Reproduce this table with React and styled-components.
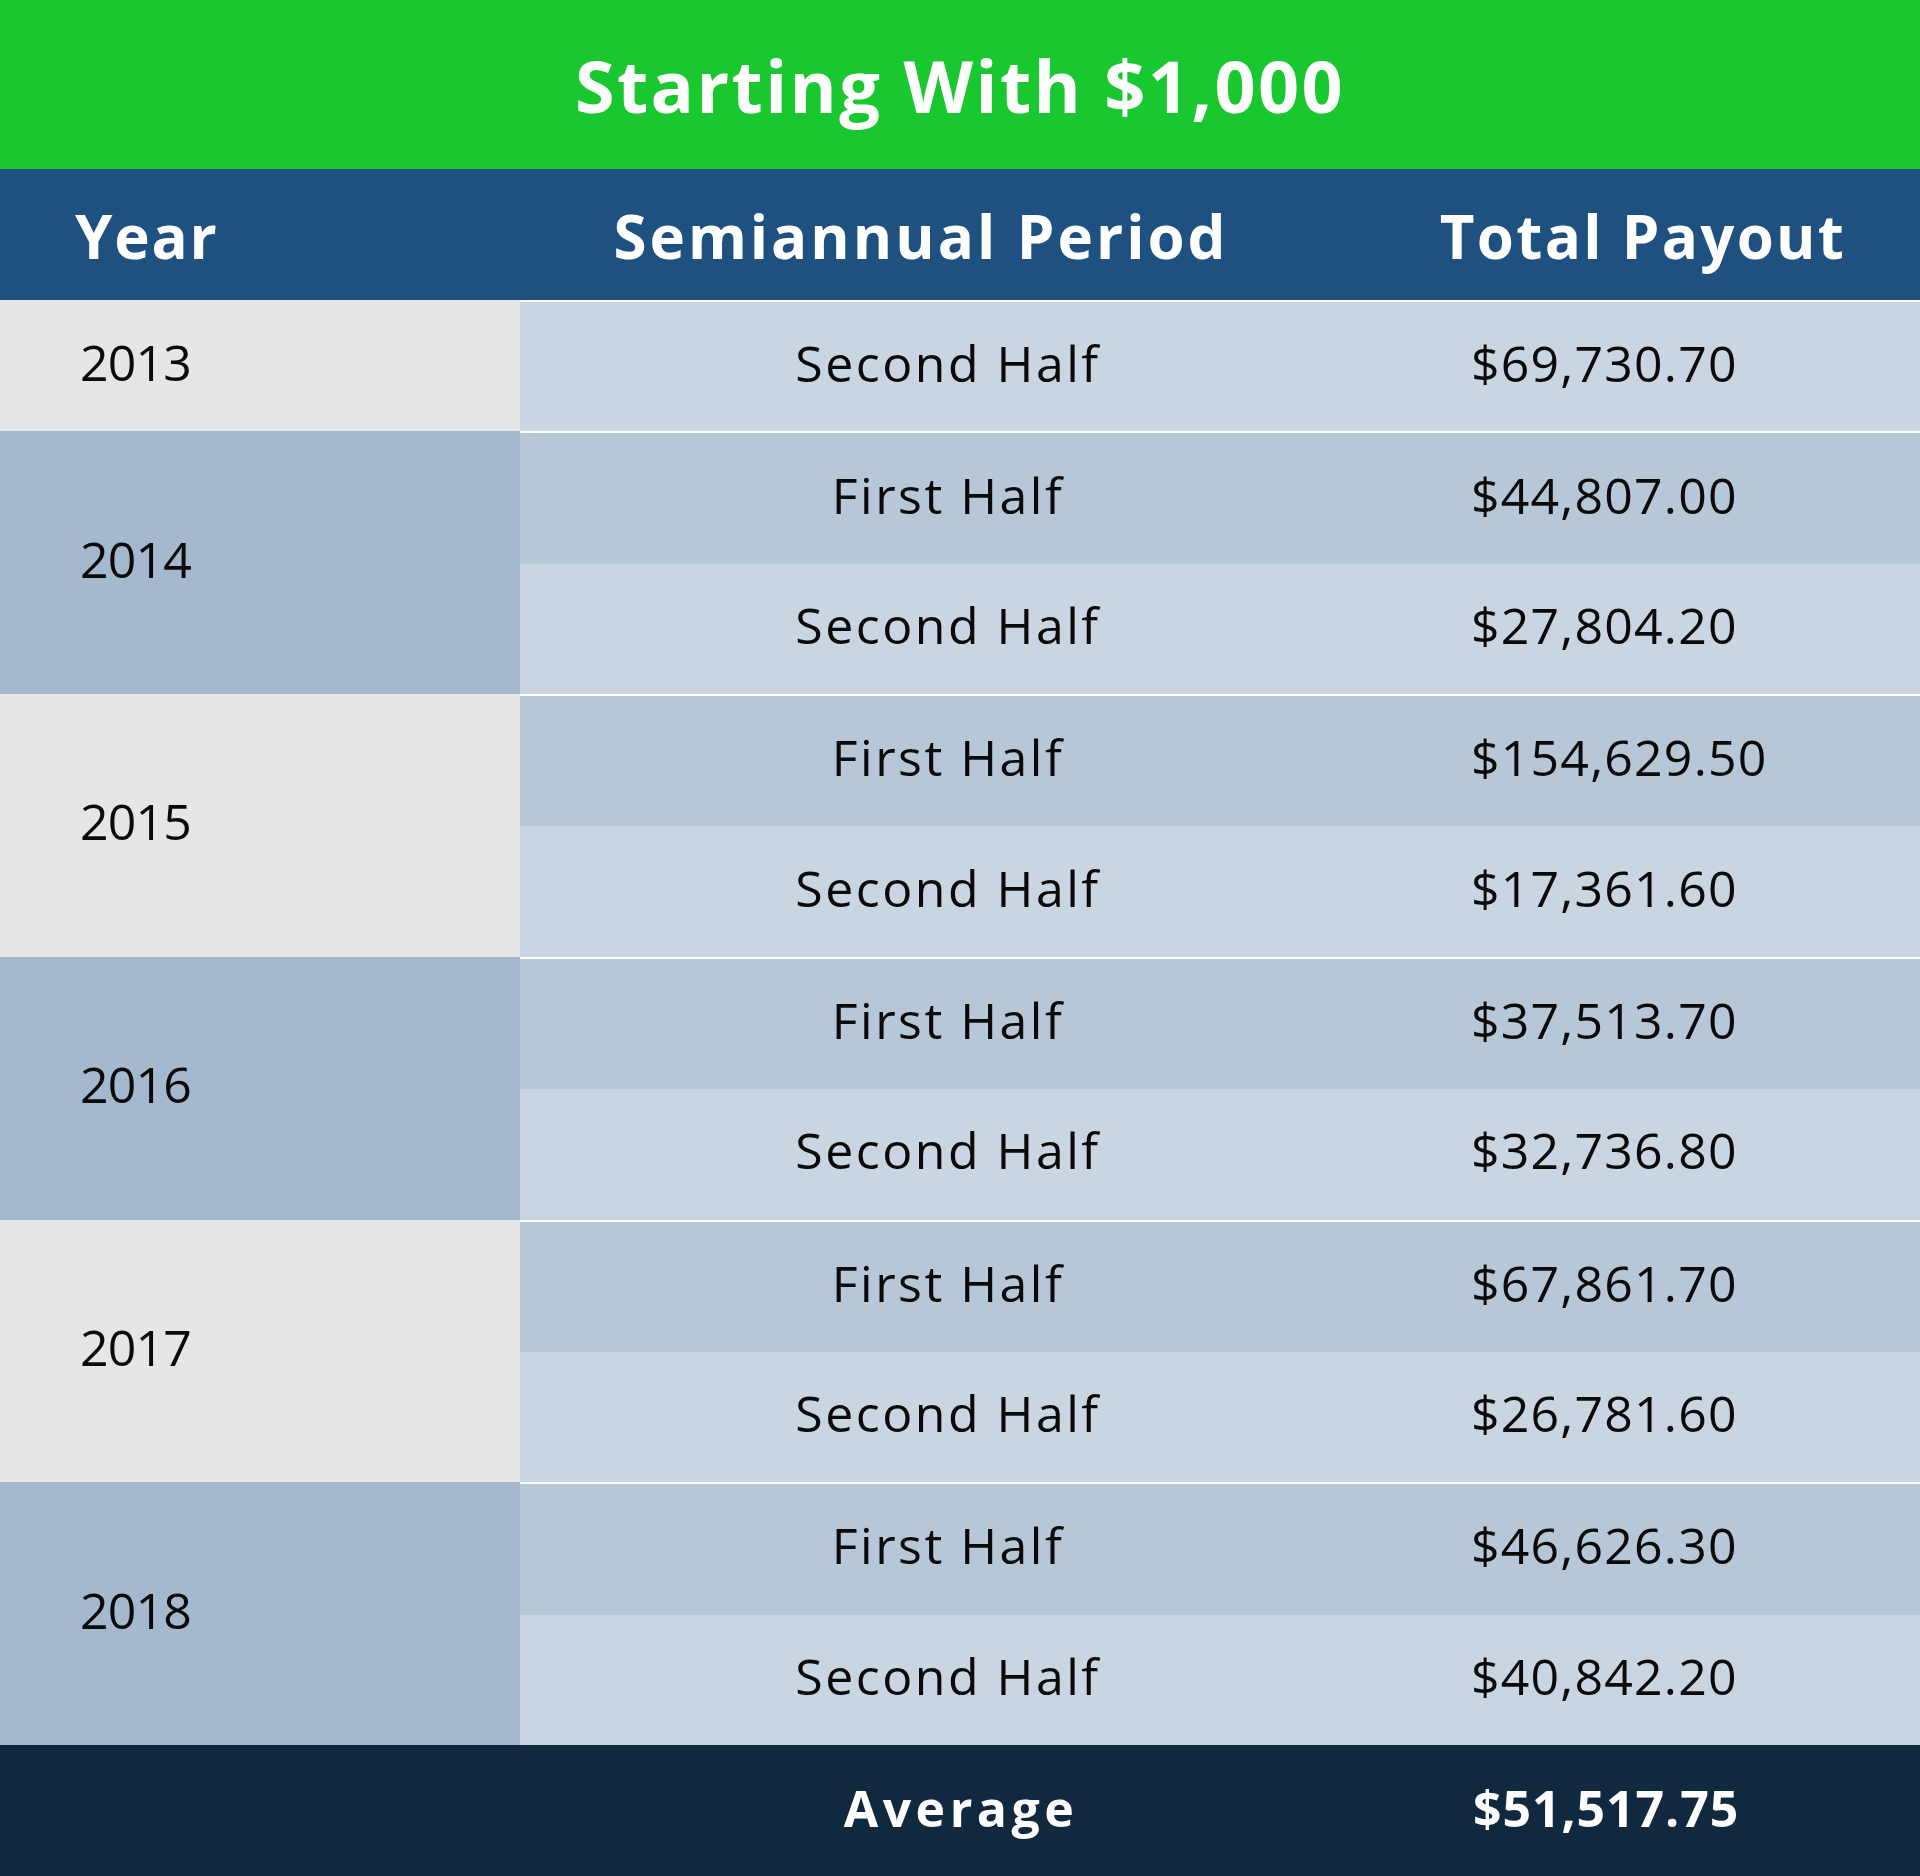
import React from "react";
import styled, { createGlobalStyle } from "styled-components";

const Global = createGlobalStyle`
  html, body { margin: 0; padding: 0; background: #ffffff; }
  * { box-sizing: border-box; }
`;

const FONT = `"Open Sans", "Noto Sans", Lato, sans-serif`;

const Page = styled.div`
  width: 1920px;
  height: 1876px;
  display: flex;
  flex-direction: column;
  font-family: ${FONT};
  color: #0a0a0a;
`;

const TitleBar = styled.div`
  height: 169px;
  flex: none;
  background: #18c82e;
  color: #ffffff;
  display: flex;
  align-items: center;
  justify-content: center;
  font-size: 72px;
  font-weight: 700;
  letter-spacing: 2.4px;
`;

const HeaderRow = styled.div`
  height: 131px;
  flex: none;
  background: #1f5180;
  color: #ffffff;
  display: grid;
  grid-template-columns: 520px 856px 1fr;
  align-items: center;
  font-size: 60px;
  font-weight: 700;
  padding-top: 3px;
`;

const HeadCell = styled.div`
  text-align: ${(p) => p.$align || "center"};
  padding-left: ${(p) => p.$pl || 0}px;
  padding-right: ${(p) => p.$pr || 0}px;
  letter-spacing: ${(p) => p.$ls || 2.5}px;
`;

const Body = styled.div`
  flex: 1;
  display: flex;
  flex-direction: column;
`;

const Group = styled.div`
  flex: ${(p) => p.$rows} 1 0;
  display: grid;
  grid-template-columns: 520px 1fr;
`;

const YearCell = styled.div`
  background: ${(p) => (p.$alt ? "#a4b9ce" : "#e6e6e6")};
  display: flex;
  align-items: center;
  padding-left: 80px;
  padding-bottom: 8px;
  font-size: 50px;
  letter-spacing: -0.8px;
`;

const Periods = styled.div`
  display: flex;
  flex-direction: column;
  border-top: 2px solid #ffffff;
`;

const SubRow = styled.div`
  flex: 1 1 0;
  display: grid;
  grid-template-columns: 856px 1fr;
  align-items: center;
  background: ${(p) => (p.$first ? "#b6c7d7" : "#c9d5e1")};
  font-size: 50px;
  padding-bottom: 8px;
`;

const PeriodCell = styled.div`
  text-align: center;
  letter-spacing: 2.5px;
`;

const PayoutCell = styled.div`
  padding-left: 95px;
  letter-spacing: 1.2px;
`;

const Footer = styled.div`
  height: 131px;
  flex: none;
  background: #10293f;
  color: #ffffff;
  display: grid;
  grid-template-columns: 520px 856px 1fr;
  align-items: center;
  font-size: 50px;
  font-weight: 700;
  padding-bottom: 6px;
`;

const FootLabel = styled.div`
  text-align: center;
  padding-left: 26px;
  letter-spacing: 4.5px;
`;

const FootValue = styled.div`
  padding-left: 97px;
  letter-spacing: 0.9px;
`;

const data = [
  { year: "2013", rows: [["Second Half", "$69,730.70", false]] },
  {
    year: "2014",
    rows: [
      ["First Half", "$44,807.00", true],
      ["Second Half", "$27,804.20", false],
    ],
  },
  {
    year: "2015",
    rows: [
      ["First Half", "$154,629.50", true],
      ["Second Half", "$17,361.60", false],
    ],
  },
  {
    year: "2016",
    rows: [
      ["First Half", "$37,513.70", true],
      ["Second Half", "$32,736.80", false],
    ],
  },
  {
    year: "2017",
    rows: [
      ["First Half", "$67,861.70", true],
      ["Second Half", "$26,781.60", false],
    ],
  },
  {
    year: "2018",
    rows: [
      ["First Half", "$46,626.30", true],
      ["Second Half", "$40,842.20", false],
    ],
  },
];

export default function App() {
  return (
    <Page>
      <Global />
      <TitleBar>Starting With $1,000</TitleBar>
      <HeaderRow>
        <HeadCell $align="left" $pl={75} $ls={1.8}>Year</HeadCell>
        <HeadCell $pr={54} $ls={3}>Semiannual Period</HeadCell>
        <HeadCell $pr={10} $ls={2.3}>Total Payout</HeadCell>
      </HeaderRow>
      <Body>
        {data.map((g, i) => (
          <Group key={g.year} $rows={g.rows.length}>
            <YearCell $alt={i % 2 === 1}>{g.year}</YearCell>
            <Periods>
              {g.rows.map(([p, v, first]) => (
                <SubRow key={p} $first={first}>
                  <PeriodCell>{p}</PeriodCell>
                  <PayoutCell>{v}</PayoutCell>
                </SubRow>
              ))}
            </Periods>
          </Group>
        ))}
      </Body>
      <Footer>
        <div />
        <FootLabel>Average</FootLabel>
        <FootValue>$51,517.75</FootValue>
      </Footer>
    </Page>
  );
}
